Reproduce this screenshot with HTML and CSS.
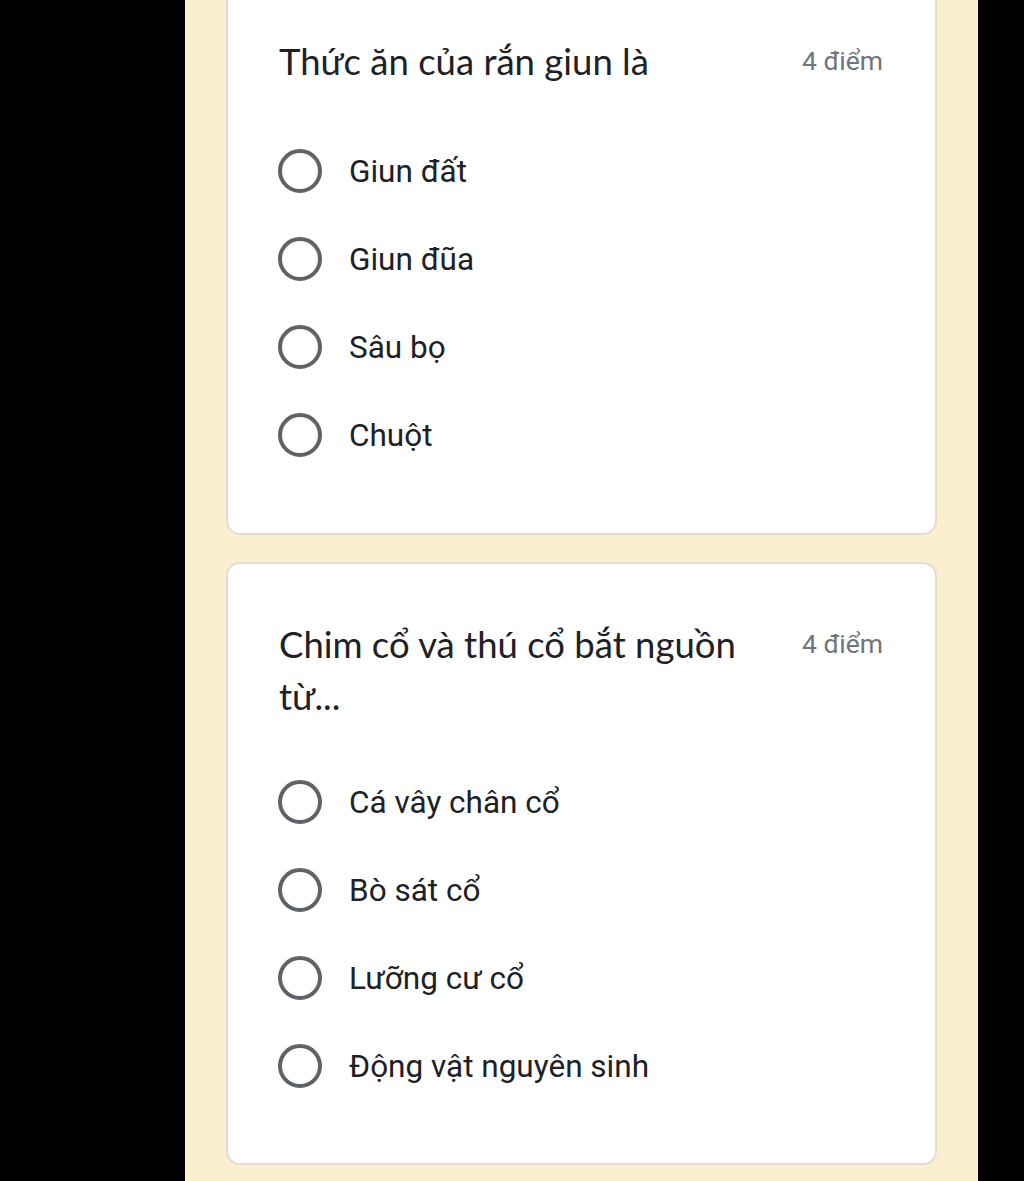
FILE: index.html
```html
<!DOCTYPE html>
<html lang="vi">
<head>
    <meta charset="UTF-8">
    <meta name="viewport" content="width=device-width, initial-scale=1.0">
    <title>Bài kiểm tra</title>
    <link rel="stylesheet" href="styles.css">
</head>
<body>
    <main class="form-page">
        <section class="question first">
            <div class="question-head">
                <h2 class="question-title">Thức ăn của rắn giun là</h2>
                <span class="points">4 điểm</span>
            </div>
            <div class="options">
                <label class="option"><span class="radio"></span><span class="option-text">Giun đất</span></label>
                <label class="option"><span class="radio"></span><span class="option-text">Giun đũa</span></label>
                <label class="option"><span class="radio"></span><span class="option-text">Sâu bọ</span></label>
                <label class="option"><span class="radio"></span><span class="option-text">Chuột</span></label>
            </div>
        </section>

        <section class="question">
            <div class="question-head">
                <h2 class="question-title">Chim cổ và thú cổ bắt nguồn từ...</h2>
                <span class="points">4 điểm</span>
            </div>
            <div class="options">
                <label class="option"><span class="radio"></span><span class="option-text">Cá vây chân cổ</span></label>
                <label class="option"><span class="radio"></span><span class="option-text">Bò sát cổ</span></label>
                <label class="option"><span class="radio"></span><span class="option-text">Lưỡng cư cổ</span></label>
                <label class="option"><span class="radio"></span><span class="option-text">Động vật nguyên sinh</span></label>
            </div>
        </section>
    </main>
</body>
</html>
```

FILE: styles.css
```css
html, body {
    margin: 0;
    background: #000;
}
body {
    height: 1181px;
    overflow: hidden;
}
.form-page {
    margin-left: 185px;
    width: 793px;
    min-height: 1181px;
    background: #fcefcf;
    padding: 0 41px;
    box-sizing: border-box;
    display: flex;
    flex-direction: column;
    gap: 27px;
}
.question {
    background: #fff;
    border: 2px solid #e2ddd2;
    border-radius: 14px;
    padding: 54px 52px 53px 50px;
}
/* the first card is scrolled partly out of view */
.question.first {
    margin-top: -21px;
    padding-bottom: 54px;
    border-top-left-radius: 0;
    border-top-right-radius: 0;
}
.question.first .options {
    margin-top: 40px;
}
.question-head {
    display: flex;
    justify-content: space-between;
    align-items: flex-start;
    gap: 40px;
}
.question-title {
    margin: 0;
    font-family: Lato, "Open Sans", sans-serif;
    font-weight: 400;
    font-size: 36.5px;
    line-height: 52px;
    color: #202124;
    padding-left: 1px;
    max-width: 480px;
}
.points {
    font-family: Roboto, sans-serif;
    font-size: 26.5px;
    line-height: 52px;
    color: #70757a;
    white-space: nowrap;
}
.options {
    margin-top: 36px;
    display: flex;
    flex-direction: column;
}
.option {
    display: flex;
    align-items: center;
    height: 88px;
}
.radio {
    width: 36px;
    height: 36px;
    border: 4px solid #5f6368;
    border-radius: 50%;
    flex: none;
}
.option-text {
    margin-left: 27px;
    font-family: Roboto, sans-serif;
    font-size: 31.5px;
    color: #202124;
}
```
